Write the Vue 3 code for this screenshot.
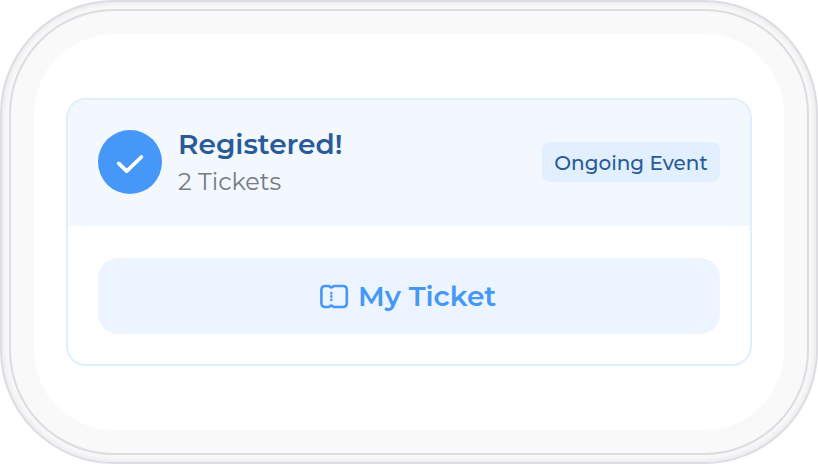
<template>
  <div class="frame">
    <div class="rim">
      <div class="bezel">
        <div class="screen">
          <div class="card">
            <!-- registration status -->
            <div class="card-header">
              <div class="check-icon">
                <svg width="64" height="64" viewBox="0 0 64 64" fill="none">
                  <path d="M20.7 33.4L28.7 41.2L43.4 27" stroke="#fff" stroke-width="3.8" stroke-linecap="round" stroke-linejoin="round" />
                </svg>
              </div>
              <div class="info">
                <div class="title">{{ status.title }}</div>
                <div class="count">{{ status.count }} Tickets</div>
              </div>
              <div class="badge"><span>{{ status.badge }}</span></div>
            </div>

            <!-- ticket button -->
            <div class="card-body">
              <button class="ticket-button">
                <svg class="ticket-icon" width="30" height="28" viewBox="0 0 30 28" fill="none" stroke="#4597f8" stroke-width="2.6" stroke-linecap="round" stroke-linejoin="round">
                  <path d="M5.9 4H9.6C10.6 4 11.2 5.5 12.3 5.5S14 4 15 4H24.3A3.5 3.5 0 0 1 27.8 7.5V21.5A3.5 3.5 0 0 1 24.3 25H15C14 25 13.4 23.5 12.3 23.5S10.6 25 9.6 25H5.9A3.5 3.5 0 0 1 2.4 21.5V7.5A3.5 3.5 0 0 1 5.9 4Z" />
                  <path d="M12.3 11V11.4M12.3 14.3V14.7M12.3 17.6V18" stroke-width="2.4" />
                </svg>
                <span class="ticket-label">My Ticket</span>
              </button>
            </div>
          </div>
        </div>
      </div>
    </div>
  </div>
</template>

<script setup>
import { ref } from 'vue';

const status = ref({
  title: 'Registered!',
  count: 2,
  badge: 'Ongoing Event'
});
</script>

<style>
body {
  background: #fff;
}
</style>

<style scoped>
.frame,
.frame * {
  box-sizing: border-box;
}

.frame {
  width: 818px;
  height: 464px;
  padding: 7px;
  border: 2px solid #dcdce2;
  border-radius: 114px;
  background: #f8f8f8;
  box-shadow: inset 0 0 5px 1px #e6e6ea;
  font-family: Montserrat, Inter, sans-serif;
}

.rim {
  height: 100%;
  border: 2px solid #dcdce2;
  border-radius: 105px;
  background: #f9f9f9;
}

.bezel {
  height: 100%;
  padding: 23px;
}

.screen {
  height: 100%;
  padding: 64px 32px;
  border-radius: 80px;
  background: #fff;
}

.card {
  height: 268px;
  border: 2px solid #e0efff;
  border-radius: 20px;
  overflow: hidden;
}

.card-header {
  display: flex;
  align-items: center;
  height: 126px;
  padding: 0 30px 2px;
  background: #f3f8ff;
}

.check-icon {
  width: 64px;
  height: 64px;
  border-radius: 50%;
  background: #4597f8;
}

.check-icon svg {
  display: block;
}

.info {
  flex: 1;
  padding: 0 0 1px 16px;
  white-space: nowrap;
}

.title {
  font-size: 28px;
  font-weight: 600;
  line-height: 36px;
  color: #285b98;
}

.count {
  font-size: 24px;
  line-height: 32px;
  margin-top: 4px;
  color: #777985;
}

.badge {
  display: flex;
  align-items: center;
  justify-content: center;
  width: 178px;
  height: 40px;
  padding-top: 2px;
  border-radius: 8px;
  background: #e1efff;
  color: #285b98;
  font-size: 20px;
  font-weight: 500;
  white-space: nowrap;
}

.card-body {
  padding: 32px 30px 30px;
}

.ticket-button {
  display: flex;
  align-items: center;
  width: 100%;
  height: 76px;
  padding: 0 0 0 221px;
  border: none;
  border-radius: 20px;
  background: #ecf5ff;
  color: #4597f8;
  font-family: inherit;
  font-size: 28px;
  font-weight: 600;
  cursor: pointer;
}

.ticket-label {
  margin-left: 9px;
  white-space: nowrap;
}
</style>
